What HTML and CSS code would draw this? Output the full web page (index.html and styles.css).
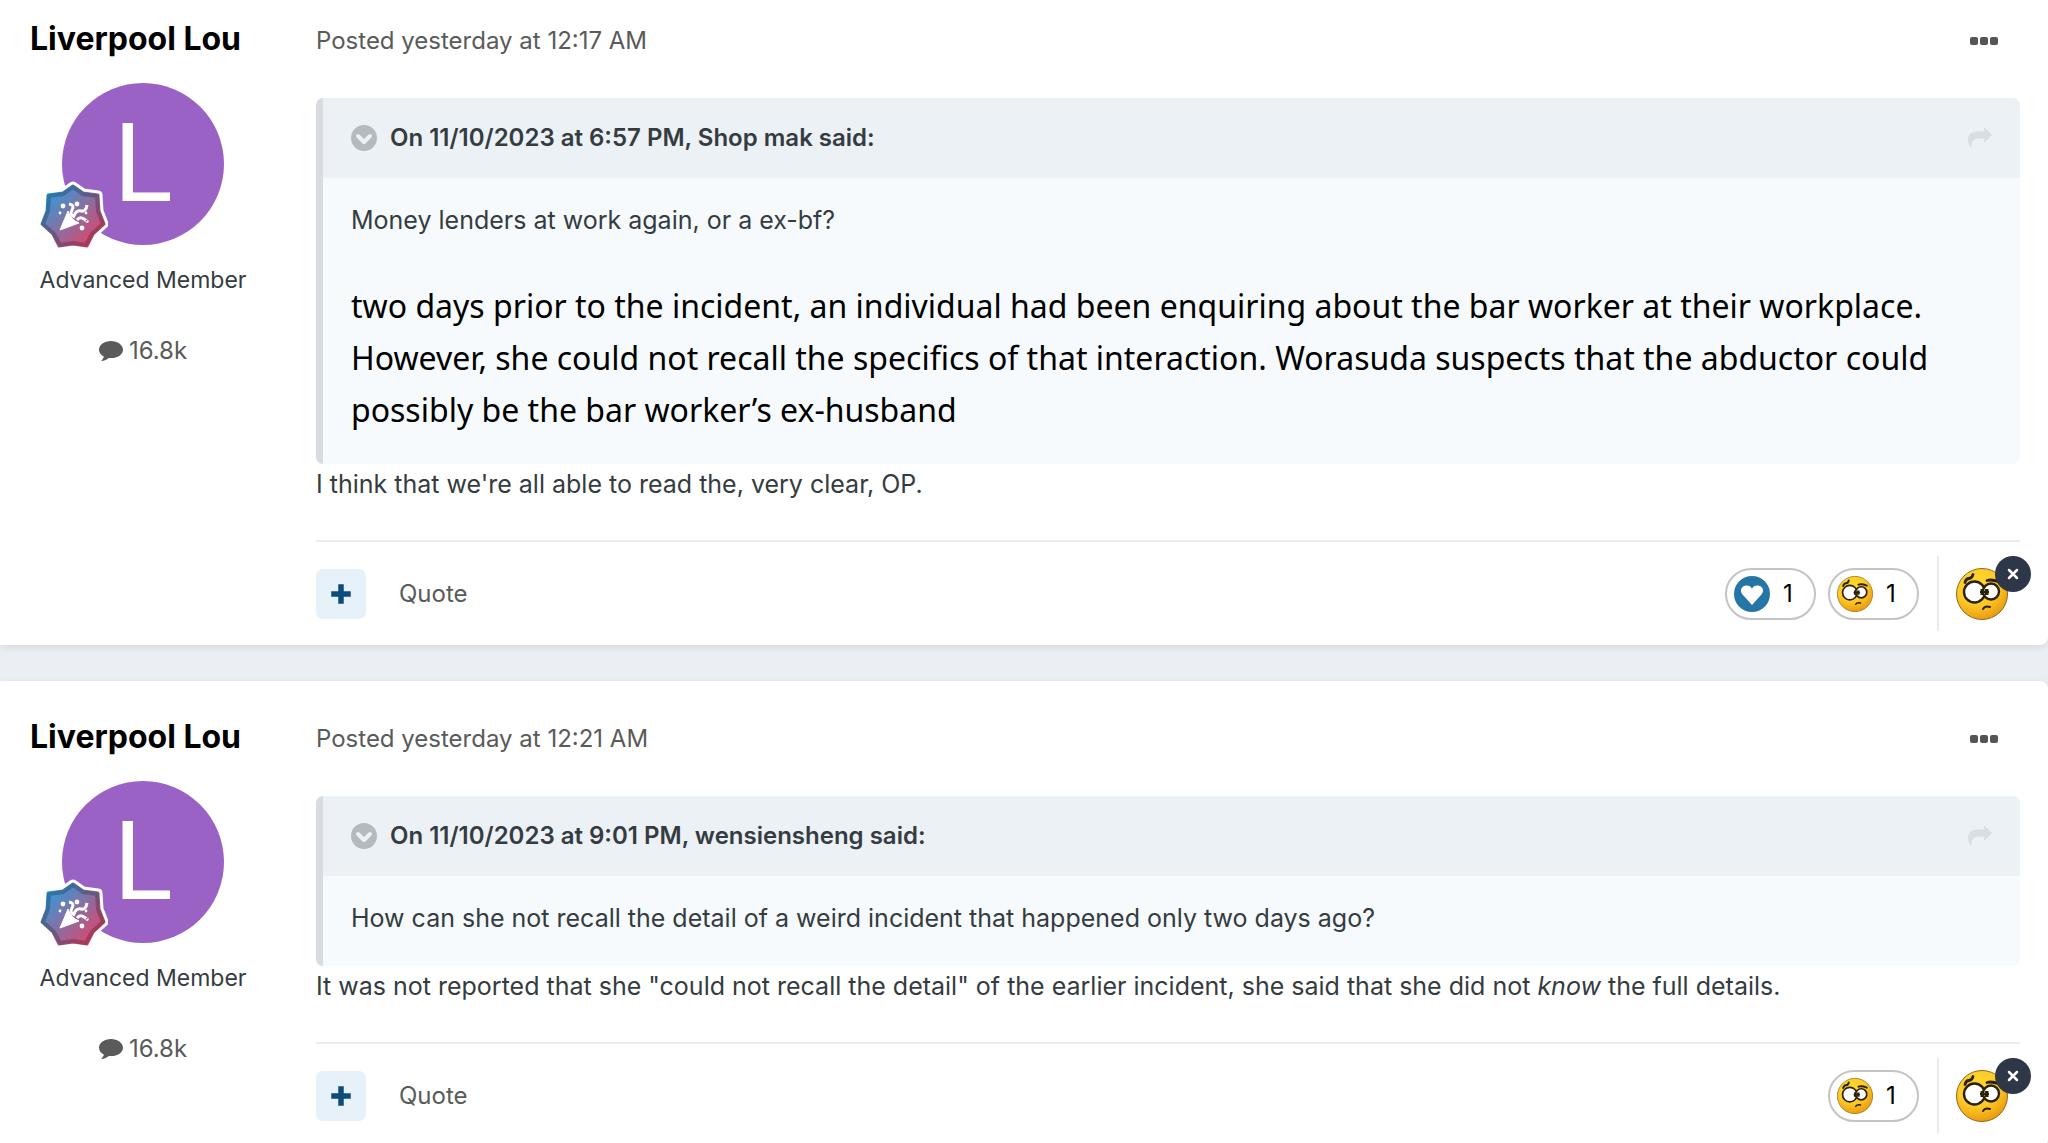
FILE: index.html
```html
<!DOCTYPE html>
<html lang="en">
<head>
    <meta charset="UTF-8">
    <meta name="viewport" content="width=device-width, initial-scale=1.0">
    <title>Topic</title>
    <link rel="stylesheet" href="styles.css">
</head>
<body>
    <!-- shared icons -->
    <svg class="sprite" aria-hidden="true">
        <defs>
            <linearGradient id="rankFill" x1="0" y1="0" x2="1" y2="1">
                <stop offset="0.1" stop-color="#2f9bdb"/>
                <stop offset="0.9" stop-color="#e0446a"/>
            </linearGradient>
            <radialGradient id="faceFill" cx="0.4" cy="0.3" r="0.75">
                <stop offset="0" stop-color="#ffd92e"/>
                <stop offset="0.55" stop-color="#fdc926"/>
                <stop offset="1" stop-color="#e8950f"/>
            </radialGradient>
        </defs>
        <symbol id="rank" viewBox="0 0 70 70">
            <path d="M35 6 45 13 60 15 61 31 66 44 55 54 49 66 35 64 21 66 15 54 4 44 9 31 10 15 25 13Z" fill="#fff" stroke="#fff" stroke-width="9" stroke-linejoin="round"/>
            <path d="M35 6 45 13 60 15 61 31 66 44 55 54 49 66 35 64 21 66 15 54 4 44 9 31 10 15 25 13Z" fill="url(#rankFill)" stroke="url(#rankFill)" stroke-width="3" stroke-linejoin="round"/>
            <path d="M35 7 45 14 59 16 60 31 65 44 54 54 48 65 35 63 22 65 16 54 5 44 10 31 11 16 25 14Z" fill="none" stroke="#000" stroke-opacity="0.22" stroke-width="4" stroke-linejoin="round"/>
            <path d="M30 31 22 50 41 43Q33 40 30 31Z" fill="#fff" stroke="#fff" stroke-linejoin="round"/>
            <path d="M31 24Q37 25 34 30T37 37M36 36Q38 30 43 31T49 25M39 40Q42 36 46 39T49 41" fill="none" stroke="#fff" stroke-width="3"/>
            <g fill="#fff"><circle cx="25" cy="26" r="2.4"/><circle cx="39" cy="24" r="2.4"/><circle cx="44" cy="48" r="2.4"/><circle cx="22" cy="33" r="1.4"/><circle cx="48" cy="33" r="1.4"/></g>
        </symbol>
        <symbol id="comment" viewBox="0 0 24 20">
            <path d="M12 0C5.400 0 0 3.900 0 8.700c0 2.900 1.900 5.400 4.800 6.900C4.500 17.200 3.600 18.600 2.200 19.900c3.300-.1 5.900-1.300 7.700-2.900.7.100 1.400.1 2.100.1 6.600 0 12-3.700 12-8.400S18.600 0 12 0Z" fill="#5a5a5a"/>
        </symbol>
        <symbol id="chevron" viewBox="0 0 26 26">
            <circle cx="13" cy="13" r="13" fill="#b5babe"/>
            <path d="M7 11 13 17 19 11" fill="none" stroke="#ecf1f5" stroke-width="4" stroke-linecap="round" stroke-linejoin="round"/>
        </symbol>
        <symbol id="share" viewBox="0 0 24 22">
            <path d="M16 0 24 8 16 16V11.500H11C5.500 11.500 3 14 3.600 21.500 1 18.500 0 16 0 13 0 7 4 4.500 11 4.500H16Z" fill="#d9dee2"/>
        </symbol>
        <symbol id="dots" viewBox="0 0 30 8">
            <g fill="#555"><rect width="8" height="8" rx="2"/><rect x="10" width="8" height="8" rx="2"/><rect x="20" width="8" height="8" rx="2"/></g>
        </symbol>
        <symbol id="plus" viewBox="0 0 20 20">
            <path d="M10 3V17M3 10H17" stroke="#0f4c7a" stroke-width="5.500" stroke-linecap="square"/>
        </symbol>
        <symbol id="heart" viewBox="0 0 36 36">
            <circle cx="18" cy="18" r="18" fill="#2576a7"/>
            <path d="M18 29 8.500 18.500C5 14 8 9.500 12.500 9.500c2.500 0 4.500 1 5.500 3.200 1-2.200 3-3.200 5.500-3.200 4.500 0 7.500 4.500 4 9Z" fill="#fff"/>
        </symbol>
        <symbol id="confused" viewBox="0 0 52 52">
            <circle cx="26" cy="26" r="25.500" fill="url(#faceFill)" stroke="#93691a"/>
            <g fill="#fff" stroke="#2a2108" stroke-width="2.400"><circle cx="18.500" cy="24" r="10.500"/><circle cx="35" cy="23.500" r="8"/></g>
            <g fill="none" stroke="#2a2108" stroke-linecap="round">
                <path d="M9 14.500Q10 10.500 13 10.500T17 6.500M31 12.500Q36 11 43 14" stroke-width="2.800"/>
                <path d="M27 41Q29 37.500 34 39" stroke-width="2"/>
            </g>
            <path d="M24.500 21h3.500v6h-3.500ZM29 21h3.500v6H29Z" fill="#2a2108"/>
            <path d="M24 24h9" stroke="#2a2108" stroke-width="2"/>
        </symbol>
        <symbol id="cross" viewBox="0 0 12 12">
            <path d="M2 2 10 10M10 2 2 10" stroke="#fff" stroke-width="2.500" stroke-linecap="round"/>
        </symbol>
    </svg>

    <main>
        <article class="post">
            <aside class="author">
                <h3><a href="#">Liverpool Lou</a></h3>
                <a class="avatar" href="#">
                    <span>L</span>
                    <svg class="rank"><use href="#rank"/></svg>
                </a>
                <p class="group">Advanced Member</p>
                <a class="count" href="#"><svg><use href="#comment"/></svg>16.8k</a>
            </aside>
            <div class="content">
                <header class="meta">
                    <a href="#">Posted yesterday at 12:17 AM</a>
                    <button class="more" aria-label="More options"><svg><use href="#dots"/></svg></button>
                </header>
                <blockquote class="quote">
                    <div class="citation">
                        <button aria-label="Collapse quote"><svg class="chevron"><use href="#chevron"/></svg></button>
                        <span>On 11/10/2023 at 6:57 PM, Shop mak said:</span>
                        <a href="#" aria-label="Go to post"><svg class="share"><use href="#share"/></svg></a>
                    </div>
                    <div class="quoted">
                        <p>Money lenders at work again, or a ex-bf?</p>
                        <p class="pasted">two days prior to the incident, an individual had been enquiring about the bar worker at their workplace. However, she could not recall the specifics of that interaction. Worasuda suspects that the abductor could possibly be the bar worker’s ex-husband</p>
                    </div>
                </blockquote>
                <p class="reply">I think that we're all able to read the, very clear, OP.</p>
                <footer class="actions">
                    <button class="multi" aria-label="Add to multi-quote"><svg><use href="#plus"/></svg></button>
                    <button class="quote-link">Quote</button>
                    <div class="reactions">
                        <button class="pill"><svg><use href="#heart"/></svg>1</button>
                        <button class="pill"><svg><use href="#confused"/></svg>1</button>
                    </div>
                    <div class="mine">
                        <svg class="face"><use href="#confused"/></svg>
                        <button class="remove" aria-label="Remove reaction"><svg><use href="#cross"/></svg></button>
                    </div>
                </footer>
            </div>
        </article>

        <article class="post">
            <aside class="author">
                <h3><a href="#">Liverpool Lou</a></h3>
                <a class="avatar" href="#">
                    <span>L</span>
                    <svg class="rank"><use href="#rank"/></svg>
                </a>
                <p class="group">Advanced Member</p>
                <a class="count" href="#"><svg><use href="#comment"/></svg>16.8k</a>
            </aside>
            <div class="content">
                <header class="meta">
                    <a href="#">Posted yesterday at 12:21 AM</a>
                    <button class="more" aria-label="More options"><svg><use href="#dots"/></svg></button>
                </header>
                <blockquote class="quote">
                    <div class="citation">
                        <button aria-label="Collapse quote"><svg class="chevron"><use href="#chevron"/></svg></button>
                        <span>On 11/10/2023 at 9:01 PM, wensiensheng said:</span>
                        <a href="#" aria-label="Go to post"><svg class="share"><use href="#share"/></svg></a>
                    </div>
                    <div class="quoted">
                        <p>How can she not recall the detail of a weird incident that happened only two days ago?</p>
                    </div>
                </blockquote>
                <p class="reply">It was not reported that she "could not recall the detail" of the earlier incident, she said that she did not <em>know</em> the full details.</p>
                <footer class="actions">
                    <button class="multi" aria-label="Add to multi-quote"><svg><use href="#plus"/></svg></button>
                    <button class="quote-link">Quote</button>
                    <div class="reactions">
                        <button class="pill"><svg><use href="#confused"/></svg>1</button>
                    </div>
                    <div class="mine">
                        <svg class="face"><use href="#confused"/></svg>
                        <button class="remove" aria-label="Remove reaction"><svg><use href="#cross"/></svg></button>
                    </div>
                </footer>
            </div>
        </article>
    </main>
</body>
</html>
```

FILE: styles.css
```css
* {
    box-sizing: border-box;
}

body {
    margin: 0;
    font-family: Inter, "Liberation Sans", sans-serif;
    font-size: 24px;
    line-height: 40px;
    color: #353c41;
    background: #ebeff4;
}

h3,
p,
blockquote {
    margin: 0;
}

a {
    color: inherit;
    text-decoration: none;
}

button {
    padding: 0;
    border: 0;
    background: none;
    font: inherit;
    color: inherit;
    cursor: pointer;
}

svg {
    display: block;
    flex: none;
}

.sprite {
    position: absolute;
    width: 0;
    height: 0;
}

main {
    display: flex;
    flex-direction: column;
    gap: 36px;
    overflow: hidden;
}

.post {
    display: flex;
    gap: 30px;
    padding: 36px 28px 14px 0;
    background: #fff;
    border-radius: 0 8px 8px 0;
    box-shadow: 0 2px 8px rgba(0, 0, 0, 0.1);
}

.post:first-child {
    padding-top: 19px;
    border-radius: 0 0 8px 0;
}

/* author column */
.author {
    flex: none;
    display: flex;
    flex-direction: column;
    align-items: center;
    width: 286px;
}

.author h3 {
    align-self: flex-start;
    padding-left: 30px;
    font-size: 32px;
    font-weight: 700;
    color: #000;
    white-space: nowrap;
}

.avatar {
    position: relative;
    display: flex;
    align-items: center;
    justify-content: center;
    width: 162px;
    height: 162px;
    margin-top: 24px;
    border-radius: 50%;
    background: #9a62c4;
    color: #fff;
    font-family: Roboto, sans-serif;
    font-size: 110px;
}

.rank {
    position: absolute;
    left: -24px;
    bottom: -5px;
    width: 70px;
    height: 70px;
    overflow: visible;
}

.group {
    margin-top: 15px;
    font-size: 23px;
}

.count {
    display: flex;
    align-items: center;
    gap: 6px;
    margin-top: 31px;
    color: #5a5a5a;
}

.count svg {
    width: 24px;
    height: 20px;
}

/* post body */
.content {
    flex: 1;
    min-width: 0;
}

.meta {
    display: flex;
    justify-content: space-between;
    align-items: center;
    padding: 2px 20px 0 0;
    color: #5a5a5a;
}

.more svg {
    width: 30px;
    height: 8px;
}

.quote {
    margin-top: 37px;
    border-left: 7px solid #d8dce1;
    border-radius: 7px;
    background: #f6fafd;
    overflow: hidden;
}

.citation {
    display: flex;
    align-items: center;
    gap: 13px;
    height: 80px;
    padding: 0 28px;
    background: #ecf1f5;
    font-weight: 600;
}

.citation span {
    flex: 1;
}

.chevron {
    width: 26px;
    height: 26px;
}

.share {
    width: 24px;
    height: 22px;
}

.quoted {
    padding: 22px 28px 28px;
    font-size: 25px;
}

.pasted {
    margin-top: 40px;
    font-family: "Noto Sans", sans-serif;
    font-size: 32px;
    line-height: 52px;
    color: #000;
}

.reply {
    font-size: 25px;
}

.actions {
    display: flex;
    align-items: center;
    margin-top: 36px;
    padding: 14px 12px 0 0;
    border-top: 2px solid #ebebeb;
}

.multi {
    display: flex;
    align-items: center;
    justify-content: center;
    width: 50px;
    height: 50px;
    border-radius: 7px;
    background: #e6f1fa;
}

.multi svg {
    width: 20px;
    height: 20px;
}

.quote-link {
    margin-left: 33px;
    color: #5a5a5a;
}

.reactions {
    display: flex;
    gap: 12px;
    margin-left: auto;
}

.pill {
    display: flex;
    align-items: center;
    gap: 13px;
    width: 91px;
    height: 52px;
    padding-left: 7px;
    border: 2px solid #c4c4c4;
    border-radius: 26px;
    color: #000;
}

.pill svg {
    width: 36px;
    height: 36px;
}

.mine {
    position: relative;
    display: flex;
    align-items: center;
    height: 75px;
    margin-left: 18px;
    padding-left: 17px;
    border-left: 2px solid #ebebeb;
}

.face {
    width: 52px;
    height: 52px;
}

/* sits over the top right of the face */
.remove {
    position: absolute;
    top: 0;
    right: -23px;
    display: flex;
    align-items: center;
    justify-content: center;
    width: 36px;
    height: 36px;
    border-radius: 50%;
    background: #2d3748;
}

.remove svg {
    width: 12px;
    height: 12px;
}

@media (max-width: 900px) {
    .post {
        flex-direction: column;
        padding-left: 28px;
    }

    .author {
        width: 100%;
    }
}
```
